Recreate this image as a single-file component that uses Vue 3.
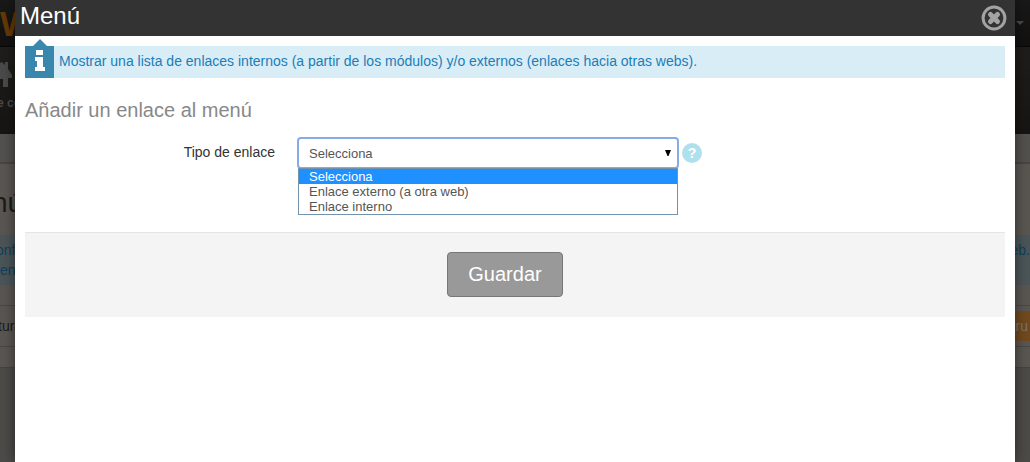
<script setup>
import { ref } from 'vue'

const options = ['Selecciona', 'Enlace externo (a otra web)', 'Enlace interno']
const selected = ref('Selecciona')
</script>

<template>
  <div class="screen">
    <div class="page" aria-hidden="true">
      <div class="topbar"><span class="brand">W</span><span class="caret"></span></div>
      <div class="nav">
        <svg class="home" width="12" height="26" viewBox="0 0 12 26">
          <path d="M0 2 L2 1 L5 4 V1 H8 V8 L12 14 V17 H8 V26 H3 V18 H0 Z" fill="#4a4a4a" />
        </svg>
        <span class="nav-label">e co</span>
      </div>
      <div class="crumbs"></div>
      <div class="heading">nú</div>
      <div class="note"><div class="note-start">onf<br />en</div><div>eb.</div></div>
      <div class="gap"></div>
      <div class="row"><span class="row-name">tura</span><span class="action">tru</span></div>
      <div class="foot"></div>
      <div class="rest"></div>
    </div>

    <section class="modal" role="dialog" aria-labelledby="modal-title">
      <header class="modal-header">
        <h1 id="modal-title">Menú</h1>
        <button class="close" type="button" aria-label="Cerrar">
          <svg width="26" height="26" viewBox="0 0 26 26">
            <circle cx="13" cy="13" r="10.9" fill="none" stroke="#a3a3a3" stroke-width="3" />
            <path d="M9.5 9.5 L16.5 16.5 M16.5 9.5 L9.5 16.5" stroke="#a3a3a3" stroke-width="5" stroke-linecap="round" />
          </svg>
        </button>
      </header>

      <div class="modal-body">
        <div class="info">
          <div class="info-icon">
            <svg width="11" height="22" viewBox="0 0 11 22">
              <path d="M2 0 H9 V5 H2 Z M1 7 H9 V17 H11 V21 H1 V17 H3 V11 H1 Z" fill="#fff" />
            </svg>
          </div>
          <p>Mostrar una lista de enlaces internos (a partir de los módulos) y/o externos (enlaces hacia otras webs).</p>
        </div>

        <h2>Añadir un enlace al menú</h2>

        <form @submit.prevent>
          <div class="field">
            <label for="link-type">Tipo de enlace</label>
            <div class="picker">
              <select id="link-type" v-model="selected">
                <option v-for="o in options" :key="o">{{ o }}</option>
              </select>
              <svg class="arrow" width="6" height="6" viewBox="0 0 6 6"><path d="M0 0 H6 L3.5 6 H2.5 Z" fill="#000" /></svg>
              <ul class="menu" role="listbox" aria-label="Tipo de enlace">
                <li v-for="o in options" :key="o" role="option" :aria-selected="o === selected" :class="{ active: o === selected }" @click="selected = o">{{ o }}</li>
              </ul>
            </div>
            <button class="help" type="button" aria-label="Ayuda">?</button>
          </div>
          <div class="actions"><button class="save" type="submit">Guardar</button></div>
        </form>
      </div>
    </section>
  </div>
</template>

<style>
body { margin: 0; }
</style>

<style scoped>
* { box-sizing: border-box; }
.screen {
  position: relative;
  height: 100vh;
  overflow: hidden;
  font-family: "Liberation Sans", Arial, sans-serif;
  font-size: 14px;
}
.page {
  display: flex;
  flex-direction: column;
  height: 100%;
  background: #595652;
  color: #1d1a1a;
}
.topbar {
  display: flex;
  justify-content: space-between;
  align-items: center;
  height: 47px;
  padding-right: 6px;
  background: linear-gradient(#1a1919, #121110);
  border-bottom: 1px solid #080808;
}
.brand { width: 15px; overflow: hidden; color: #643907; font: bold 34px "Open Sans", sans-serif; }
.caret { border: 4px solid transparent; border-top-color: #4a4a4a; border-bottom: 0; }
.nav { height: 87px; padding-top: 14px; background: linear-gradient(#1f1e1c, #171513); }
.home { display: block; }
.nav-label { display: block; margin-top: 8px; line-height: 16px; font-size: 12px; font-weight: bold; color: #4a4a4a; text-indent: -3px; }
.crumbs { height: 30px; background: #53514e; border-bottom: 2px solid #474543; }
.heading { height: 71px; padding-top: 20px; font-size: 28px; line-height: 38px; text-indent: -8px; }
.note {
  display: flex;
  justify-content: space-between;
  height: 50px;
  padding-top: 5px;
  background: #4b5558;
  color: #10415c;
  line-height: 20px;
}
.note-start { text-indent: -4px; }
.gap { height: 21px; border-bottom: 1px solid #4a4845; }
.row { display: flex; justify-content: space-between; align-items: center; height: 41px; border-bottom: 1px solid #4a4845; }
.row-name { text-indent: -2px; }
.action { padding: 0 2px; line-height: 30px; background: #704a1e; color: #79736c; }
.foot { height: 21px; border-bottom: 1px solid #454341; }
.rest { flex: 1; background: #4d4b48; }

.modal {
  position: absolute;
  inset: 0 15px;
  background: #fff;
  box-shadow: 0 0 12px rgba(0, 0, 0, 0.5);
}
.modal-header {
  display: flex;
  justify-content: space-between;
  align-items: center;
  height: 36px;
  padding: 0 8px 0 5px;
  background: #333;
}
h1 { margin: 0; padding-bottom: 4px; color: #fff; font-size: 24px; font-weight: normal; line-height: 28px; }
.close { display: flex; padding: 0; border: 0; background: none; }
.modal-body { padding: 10px; }
.info { display: flex; min-height: 32px; background: #d9edf7; color: #1b7db8; }
.info p { margin: 0; padding-left: 5px; line-height: 30px; }
.info-icon { position: relative; display: flex; justify-content: center; width: 29px; padding-top: 4px; background: #3a87ad; }
.info-icon::before {
  content: "";
  position: absolute;
  top: -7px;
  left: 8px;
  border: 7px solid transparent;
  border-top: 0;
  border-bottom-color: #3a87ad;
}
h2 { margin: 20px 0 15px; color: #888; font-size: 20px; font-weight: normal; line-height: 24px; }
.field { display: flex; align-items: center; height: 32px; color: #333; }
.field label { width: 250px; text-align: right; line-height: 20px; padding-bottom: 2px; }
.picker { position: relative; width: 382px; margin-left: 22px; }
select {
  display: block;
  width: 100%;
  height: 32px;
  padding: 0 24px 0 10px;
  appearance: none;
  border: 2px solid #87abea;
  border-radius: 4px;
  outline: 0;
  background: #fff;
  color: #555;
  font: 13px "Liberation Sans", Arial, sans-serif;
}
.arrow { position: absolute; top: 13px; right: 8px; pointer-events: none; }
.menu {
  position: absolute;
  top: 31px;
  left: 1px;
  right: 1px;
  margin: 0;
  padding: 0;
  border: 1px solid #7393ad;
  background: #fff;
  color: #555;
  font-size: 13px;
  line-height: 15px;
  list-style: none;
}
.menu li { padding-left: 10px; }
.menu .active { background: #1e90ff; color: #fff; }
.help {
  width: 20px;
  height: 20px;
  margin-left: 3px;
  padding: 0;
  border: 0;
  border-radius: 50%;
  background: #afe0ed;
  color: #fff;
  font: bold 14px "Liberation Sans", Arial, sans-serif;
}
.actions { display: flex; justify-content: center; margin-top: 63px; padding: 19px 20px 20px 0; border-top: 1px solid #e5e5e5; background: #f4f4f4; }
.save {
  height: 45px;
  padding: 0 20px;
  border: 1px solid #777;
  border-radius: 4px;
  background: #999;
  color: #fff;
  font: 20px "Liberation Sans", Arial, sans-serif;
}
</style>
